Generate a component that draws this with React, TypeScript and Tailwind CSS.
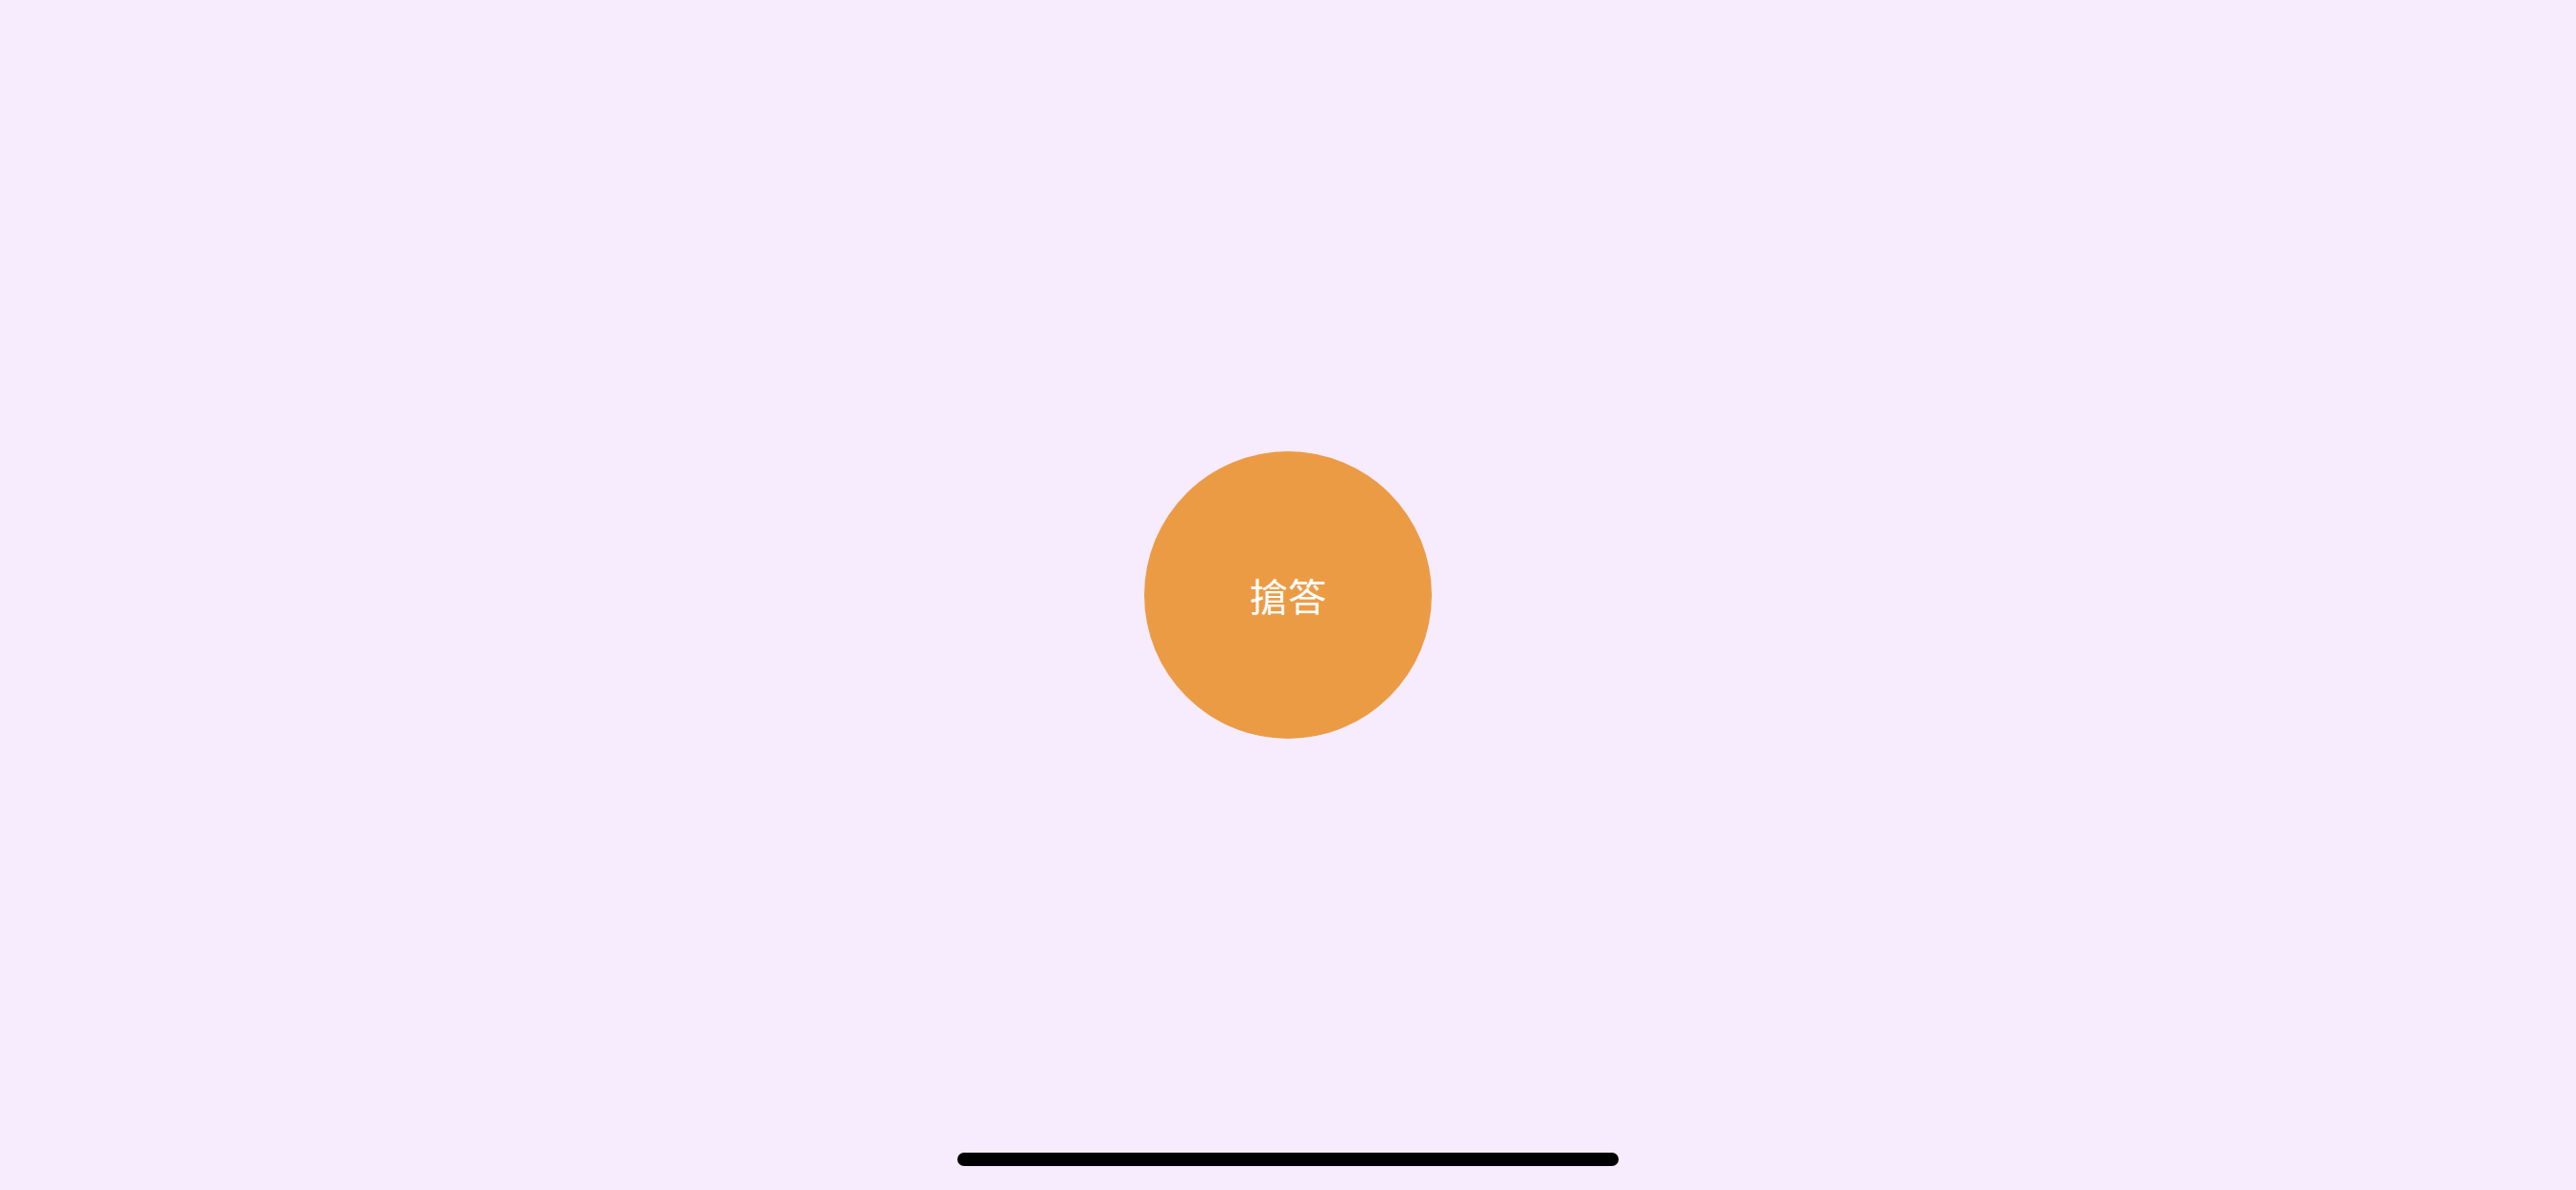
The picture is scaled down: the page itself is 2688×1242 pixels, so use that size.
export default function App() {
  return (
    <div className="relative flex h-[1242px] w-full items-center justify-center bg-[#f7ebfe]">
      <button className="flex h-[300px] w-[300px] items-center justify-center rounded-full bg-[#ec9b45] text-[40px] text-white font-['Noto_Sans_CJK_TC',sans-serif]">
        搶答
      </button>

      {/* home indicator */}
      <div className="absolute bottom-[25px] left-1/2 h-[14px] w-[690px] -translate-x-1/2 rounded-full bg-black" />
    </div>
  );
}
